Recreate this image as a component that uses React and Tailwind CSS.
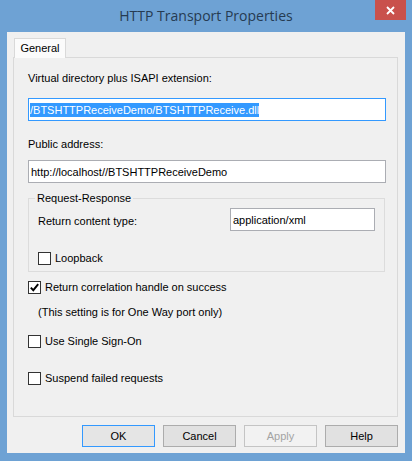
import React from "react";

const Check = ({ checked }) => (
  <span className="w-[13px] h-[13px] shrink-0 border border-[#333333] bg-white flex items-center justify-center">
    {checked && (
      <svg width="11" height="11" viewBox="0 0 11 11">
        <path d="M1.8 5.6 L4.3 8.2 L9.2 2.2" fill="none" stroke="#000" strokeWidth="1.9" />
      </svg>
    )}
  </span>
);

const TextBox = ({ value, focused, className = "" }) => (
  <div
    className={`h-[23px] flex items-center bg-white border pl-[1px] ${
      focused ? "border-[#3399ff]" : "border-[#abadb3]"
    } ${className}`}
  >
    {focused ? (
      <span className="bg-[#3399ff] text-white leading-[14px]">{value}</span>
    ) : (
      <span className="pl-px leading-[14px]">{value}</span>
    )}
  </div>
);

const DlgButton = ({ children, variant }) => (
  <button
    className={`w-[73px] h-[22px] text-[11px] border ${
      variant === "default"
        ? "border-[#3399ff] bg-[#e5e5e5] text-black"
        : variant === "disabled"
        ? "border-[#c4c4c4] bg-[#f2f2f2] text-[#a3a3a3]"
        : "border-[#acacac] bg-[#e1e1e1] text-black"
    }`}
  >
    {children}
  </button>
);

export default function App() {
  return (
    <div
      className="w-[412px] h-[461px] bg-[#6ea2d4] flex flex-col text-[11px] text-black"
      style={{ fontFamily: '"Liberation Sans", Arial, sans-serif' }}
    >
      {/* Title bar */}
      <div className="relative h-[32px] flex items-center justify-center">
        <span
          className="text-[14px] text-[#263b52] pb-[2px]"
          style={{ fontFamily: '"Open Sans", "Noto Sans", sans-serif' }}
        >
          HTTP Transport Properties
        </span>
        <div className="absolute right-[6px] top-0 w-[31px] h-[20px] bg-[#c9514c] flex items-center justify-center">
          <svg width="9" height="9" viewBox="0 0 9 9">
            <path d="M1 1 L8 8 M8 1 L1 8" stroke="#fff" strokeWidth="1.8" />
          </svg>
        </div>
      </div>

      {/* Client area */}
      <div className="mx-[7px] h-[421px] bg-[#f0f0f0] flex flex-col">
        {/* Tabs */}
        <div className="mt-[6px] h-[19px] flex pl-[7px]">
          <div className="w-[52px] h-[20px] bg-[#fbfbfb] border border-b-0 border-[#d9d9d9] flex items-center justify-center relative z-10">
            General
          </div>
        </div>

        {/* Tab panel */}
        <div className="ml-[6px] w-[385px] h-[360px] border border-[#d9d9d9] bg-[#f0f0f0] flex flex-col pl-[14px] pr-[11px]">
          <div className="mt-[14px] leading-[13px]">Virtual directory plus ISAPI extension:</div>
          <TextBox className="mt-[13px]" focused value="/BTSHTTPReceiveDemo/BTSHTTPReceive.dll" />
          <div className="mt-[17px] leading-[13px]">Public address:</div>
          <TextBox className="mt-[9px]" value="http://localhost//BTSHTTPReceiveDemo" />

          {/* Request-Response group */}
          <fieldset className="mt-[9px] border border-[#dcdcdc] pb-[6px] mr-px">
            <legend className="ml-[6px] px-[2px] leading-[13px]">Request-Response</legend>
            <div className="mt-[3px] h-[23px] flex items-center justify-between pl-[9px] pr-[9px]">
              <span className="pt-[3px]">Return content type:</span>
              <TextBox className="w-[145px]" value="application/xml" />
            </div>
            <div className="mt-[21px] h-[13px] flex items-center gap-[4px] pl-[9px]">
              <Check />
              <span>Loopback</span>
            </div>
          </fieldset>

          <div className="mt-[9px] h-[13px] flex items-center gap-[4px]">
            <Check checked />
            <span>Return correlation handle on success</span>
          </div>
          <div className="mt-[12px] pl-[10px] leading-[13px]">(This setting is for One Way port only)</div>

          <div className="mt-[16px] h-[13px] flex items-center gap-[4px]">
            <Check />
            <span>Use Single Sign-On</span>
          </div>
          <div className="mt-[24px] h-[13px] flex items-center gap-[4px]">
            <Check />
            <span>Suspend failed requests</span>
          </div>
        </div>

        {/* Buttons */}
        <div className="mt-[8px] flex justify-end gap-[8px] pr-[7px]">
          <DlgButton variant="default">OK</DlgButton>
          <DlgButton>Cancel</DlgButton>
          <DlgButton variant="disabled">Apply</DlgButton>
          <DlgButton>Help</DlgButton>
        </div>
      </div>
    </div>
  );
}
